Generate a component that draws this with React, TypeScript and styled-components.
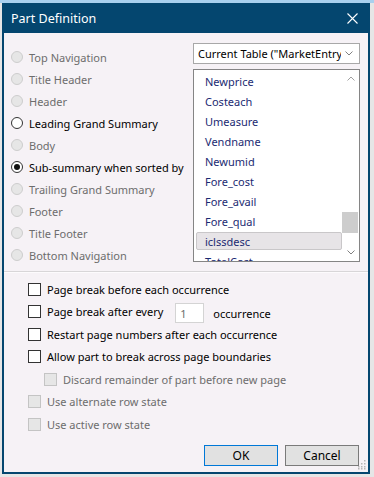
import styled, { createGlobalStyle } from "styled-components";

const GlobalStyle = createGlobalStyle`
  html, body {
    margin: 0;
    padding: 0;
  }
  body {
    width: 374px;
    height: 477px;
    overflow: hidden;
    background: #e8e8e8;
    font-family: "Noto Sans", "Liberation Sans", sans-serif;
    font-size: 11px;
  }
`;

const Screen = styled.div`
  width: 374px;
  height: 477px;
  box-sizing: border-box;
  padding: 3px 4px 3px 2px;
  background: linear-gradient(#a9d0ee 0 3px, #e6e6e6 3px);
  display: flex;
`;

const Dialog = styled.div`
  position: relative;
  flex: 1;
  display: flex;
  flex-direction: column;
  border: 2px solid #04466f;
  border-top: 0;
  background: #f6f2f6;
`;

const TitleBar = styled.div`
  height: 30px;
  background: #04466f;
  color: #fff;
  display: flex;
  align-items: center;
  justify-content: space-between;
  padding: 0 10px 0 7px;
  font-size: 12.5px;
  flex-shrink: 0;
`;

const Body = styled.div`
  flex: 1;
  display: flex;
  flex-direction: column;
`;

const TopSection = styled.div`
  display: flex;
  justify-content: space-between;
  padding: 10px 8px 0 7px;
`;

const RadioList = styled.div`
  margin-top: 3px;
  display: flex;
  flex-direction: column;
`;

const RadioRow = styled.div<{ $disabled?: boolean }>`
  height: 22px;
  display: flex;
  align-items: center;
  gap: 6px;
  color: ${(p) => (p.$disabled ? "#6d6d6d" : "#000")};
  white-space: nowrap;
`;

const Radio = styled.span<{ $disabled?: boolean; $checked?: boolean }>`
  width: 12px;
  height: 12px;
  box-sizing: border-box;
  border-radius: 50%;
  border: 1px solid ${(p) => (p.$disabled ? "#cdcdcd" : "#333")};
  background: ${(p) => (p.$disabled ? "#e6e6e6" : "#fff")};
  display: flex;
  align-items: center;
  justify-content: center;
  &::after {
    content: "";
    display: ${(p) => (p.$checked ? "block" : "none")};
    width: 6px;
    height: 6px;
    border-radius: 50%;
    background: #111;
  }
`;

const RightColumn = styled.div`
  width: 167px;
  display: flex;
  flex-direction: column;
  gap: 5px;
`;

const Select = styled.div`
  height: 21px;
  box-sizing: border-box;
  border: 1px solid #a8a8a8;
  background: #fff;
  display: flex;
  align-items: center;
  padding: 0 6px 0 4px;
  gap: 4px;
  color: #000;
`;

const SelectText = styled.span`
  flex: 1;
  min-width: 0;
  overflow: hidden;
  white-space: nowrap;
`;

const ListBox = styled.div`
  height: 193px;
  box-sizing: border-box;
  border: 1px solid #858585;
  background: #fff;
  display: flex;
  overflow: hidden;
`;

const Items = styled.div`
  flex: 1;
  padding: 1px 0 0 2px;
  display: flex;
  flex-direction: column;
`;

const Item = styled.div<{ $selected?: boolean }>`
  height: 20px;
  flex-shrink: 0;
  box-sizing: border-box;
  display: flex;
  align-items: center;
  padding-left: 9px;
  color: #1b2a72;
  ${(p) =>
    p.$selected &&
    `
    margin: 1px 0;
    height: 18px;
    background: #e7e4e7;
    border: 1px solid #c9c7c9;
    border-radius: 2px;
    padding-left: 8px;
  `}
`;

const ScrollBar = styled.div`
  width: 17px;
  display: flex;
  flex-direction: column;
  align-items: center;
  background: #fff;
`;

const ScrollButton = styled.div`
  height: 17px;
  width: 17px;
  display: flex;
  align-items: center;
  justify-content: center;
`;

const Track = styled.div`
  flex: 1;
  width: 17px;
  display: flex;
  flex-direction: column;
`;

const Thumb = styled.div`
  margin-top: 125px;
  height: 21px;
  width: 16px;
  background: #cdcdcd;
`;

const Separator = styled.div`
  margin-top: 5px;
  height: 1px;
  background: #d8d6d8;
  border-bottom: 1px solid #fdfbfd;
`;

const Options = styled.div`
  padding: 5px 0 0 24px;
  display: grid;
  grid-auto-rows: 22.5px;
  justify-items: start;
`;

const CheckRow = styled.div<{ $disabled?: boolean; $indent?: number }>`
  display: flex;
  align-items: center;
  gap: 6px;
  padding-left: ${(p) => p.$indent ?? 0}px;
  color: ${(p) => (p.$disabled ? "#6d6d6d" : "#000")};
  white-space: nowrap;
`;

const Check = styled.span<{ $disabled?: boolean }>`
  width: 13px;
  height: 13px;
  box-sizing: border-box;
  border: 1px solid ${(p) => (p.$disabled ? "#c4c4c4" : "#333")};
  background: ${(p) => (p.$disabled ? "#e6e6e6" : "#fff")};
  flex-shrink: 0;
`;

const NumberBox = styled.span`
  margin-left: 6px;
  width: 29px;
  height: 20px;
  box-sizing: border-box;
  border: 1px solid #d4d4d4;
  background: #fff;
  color: #6d6d6d;
  display: flex;
  align-items: flex-end;
  padding: 0 0 1px 4px;
  margin-top: 2px;
`;

const Suffix = styled.span`
  margin-left: 3px;
  margin-top: 3px;
`;

const ButtonRow = styled.div`
  margin-top: auto;
  display: flex;
  justify-content: flex-end;
  gap: 7px;
  padding: 0 9px 6px 0;
`;

const Button = styled.button<{ $default?: boolean }>`
  width: 74px;
  height: 21px;
  box-sizing: border-box;
  border: 1px solid ${(p) => (p.$default ? "#0078d7" : "#7a7a7a")};
  background: #e1e1e1;
  font-family: inherit;
  font-size: 12px;
  color: #000;
  padding: 0;
`;

const Grip = styled.svg`
  position: absolute;
  right: 2px;
  bottom: 2px;
`;

const Chevron = ({ up }: { up?: boolean }) => (
  <svg width="8" height="5" viewBox="0 0 8 5">
    <polyline
      points={up ? "0.5,4.5 4,1 7.5,4.5" : "0.5,0.5 4,4 7.5,0.5"}
      fill="none"
      stroke={up ? "#a0a0a0" : "#808080"}
      strokeWidth="1"
    />
  </svg>
);

const parts = [
  { label: "Top Navigation", disabled: true },
  { label: "Title Header", disabled: true },
  { label: "Header", disabled: true },
  { label: "Leading Grand Summary" },
  { label: "Body", disabled: true },
  { label: "Sub-summary when sorted by", checked: true },
  { label: "Trailing Grand Summary", disabled: true },
  { label: "Footer", disabled: true },
  { label: "Title Footer", disabled: true },
  { label: "Bottom Navigation", disabled: true },
];

const fields = [
  "Newprice",
  "Costeach",
  "Umeasure",
  "Vendname",
  "Newumid",
  "Fore_cost",
  "Fore_avail",
  "Fore_qual",
  "iclssdesc",
  "TotalCost",
];

const options = [
  { label: "Restart page numbers after each occurrence" },
  { label: "Allow part to break across page boundaries" },
  { label: "Discard remainder of part before new page", disabled: true, indent: 16 },
  { label: "Use alternate row state", disabled: true },
  { label: "Use active row state", disabled: true },
];

function App() {
  return (
    <Screen>
      <GlobalStyle />
      <Dialog>
        <TitleBar>
          <span>Part Definition</span>
          <svg width="11" height="11" viewBox="0 0 11 11">
            <path d="M0.5 0.5 L10.5 10.5 M10.5 0.5 L0.5 10.5" stroke="#fff" strokeWidth="1.1" />
          </svg>
        </TitleBar>
        <Body>
          <TopSection>
            <RadioList>
              {parts.map((p) => (
                <RadioRow key={p.label} $disabled={p.disabled}>
                  <Radio $disabled={p.disabled} $checked={p.checked} />
                  {p.label}
                </RadioRow>
              ))}
            </RadioList>
            <RightColumn>
              <Select>
                <SelectText>Current Table ("MarketEntry")</SelectText>
                <Chevron />
              </Select>
              <ListBox>
                <Items>
                  {fields.map((f) => (
                    <Item key={f} $selected={f === "iclssdesc"}>
                      {f}
                    </Item>
                  ))}
                </Items>
                <ScrollBar>
                  <ScrollButton>
                    <Chevron up />
                  </ScrollButton>
                  <Track>
                    <Thumb />
                  </Track>
                  <ScrollButton>
                    <Chevron up={false} />
                  </ScrollButton>
                </ScrollBar>
              </ListBox>
            </RightColumn>
          </TopSection>
          <Separator />
          <Options>
            <CheckRow>
              <Check />
              <span>Page break before each occurrence</span>
            </CheckRow>
            <CheckRow>
              <Check />
              <span>Page break after every</span>
              <NumberBox>1</NumberBox>
              <Suffix>occurrence</Suffix>
            </CheckRow>
            {options.map((o) => (
              <CheckRow key={o.label} $disabled={o.disabled} $indent={o.indent}>
                <Check $disabled={o.disabled} />
                <span>{o.label}</span>
              </CheckRow>
            ))}
          </Options>
          <ButtonRow>
            <Button $default>OK</Button>
            <Button>Cancel</Button>
          </ButtonRow>
        </Body>
        <Grip width="10" height="10" viewBox="0 0 10 10">
          {[
            [8, 0], [8, 3], [5, 3], [8, 6], [5, 6], [2, 6], [8, 8], [5, 8], [2, 8],
          ].map(([x, y], i) => (
            <rect key={i} x={x} y={y} width="1.5" height="1.5" fill="#b5b5b5" />
          ))}
        </Grip>
      </Dialog>
    </Screen>
  );
}

export default App;
